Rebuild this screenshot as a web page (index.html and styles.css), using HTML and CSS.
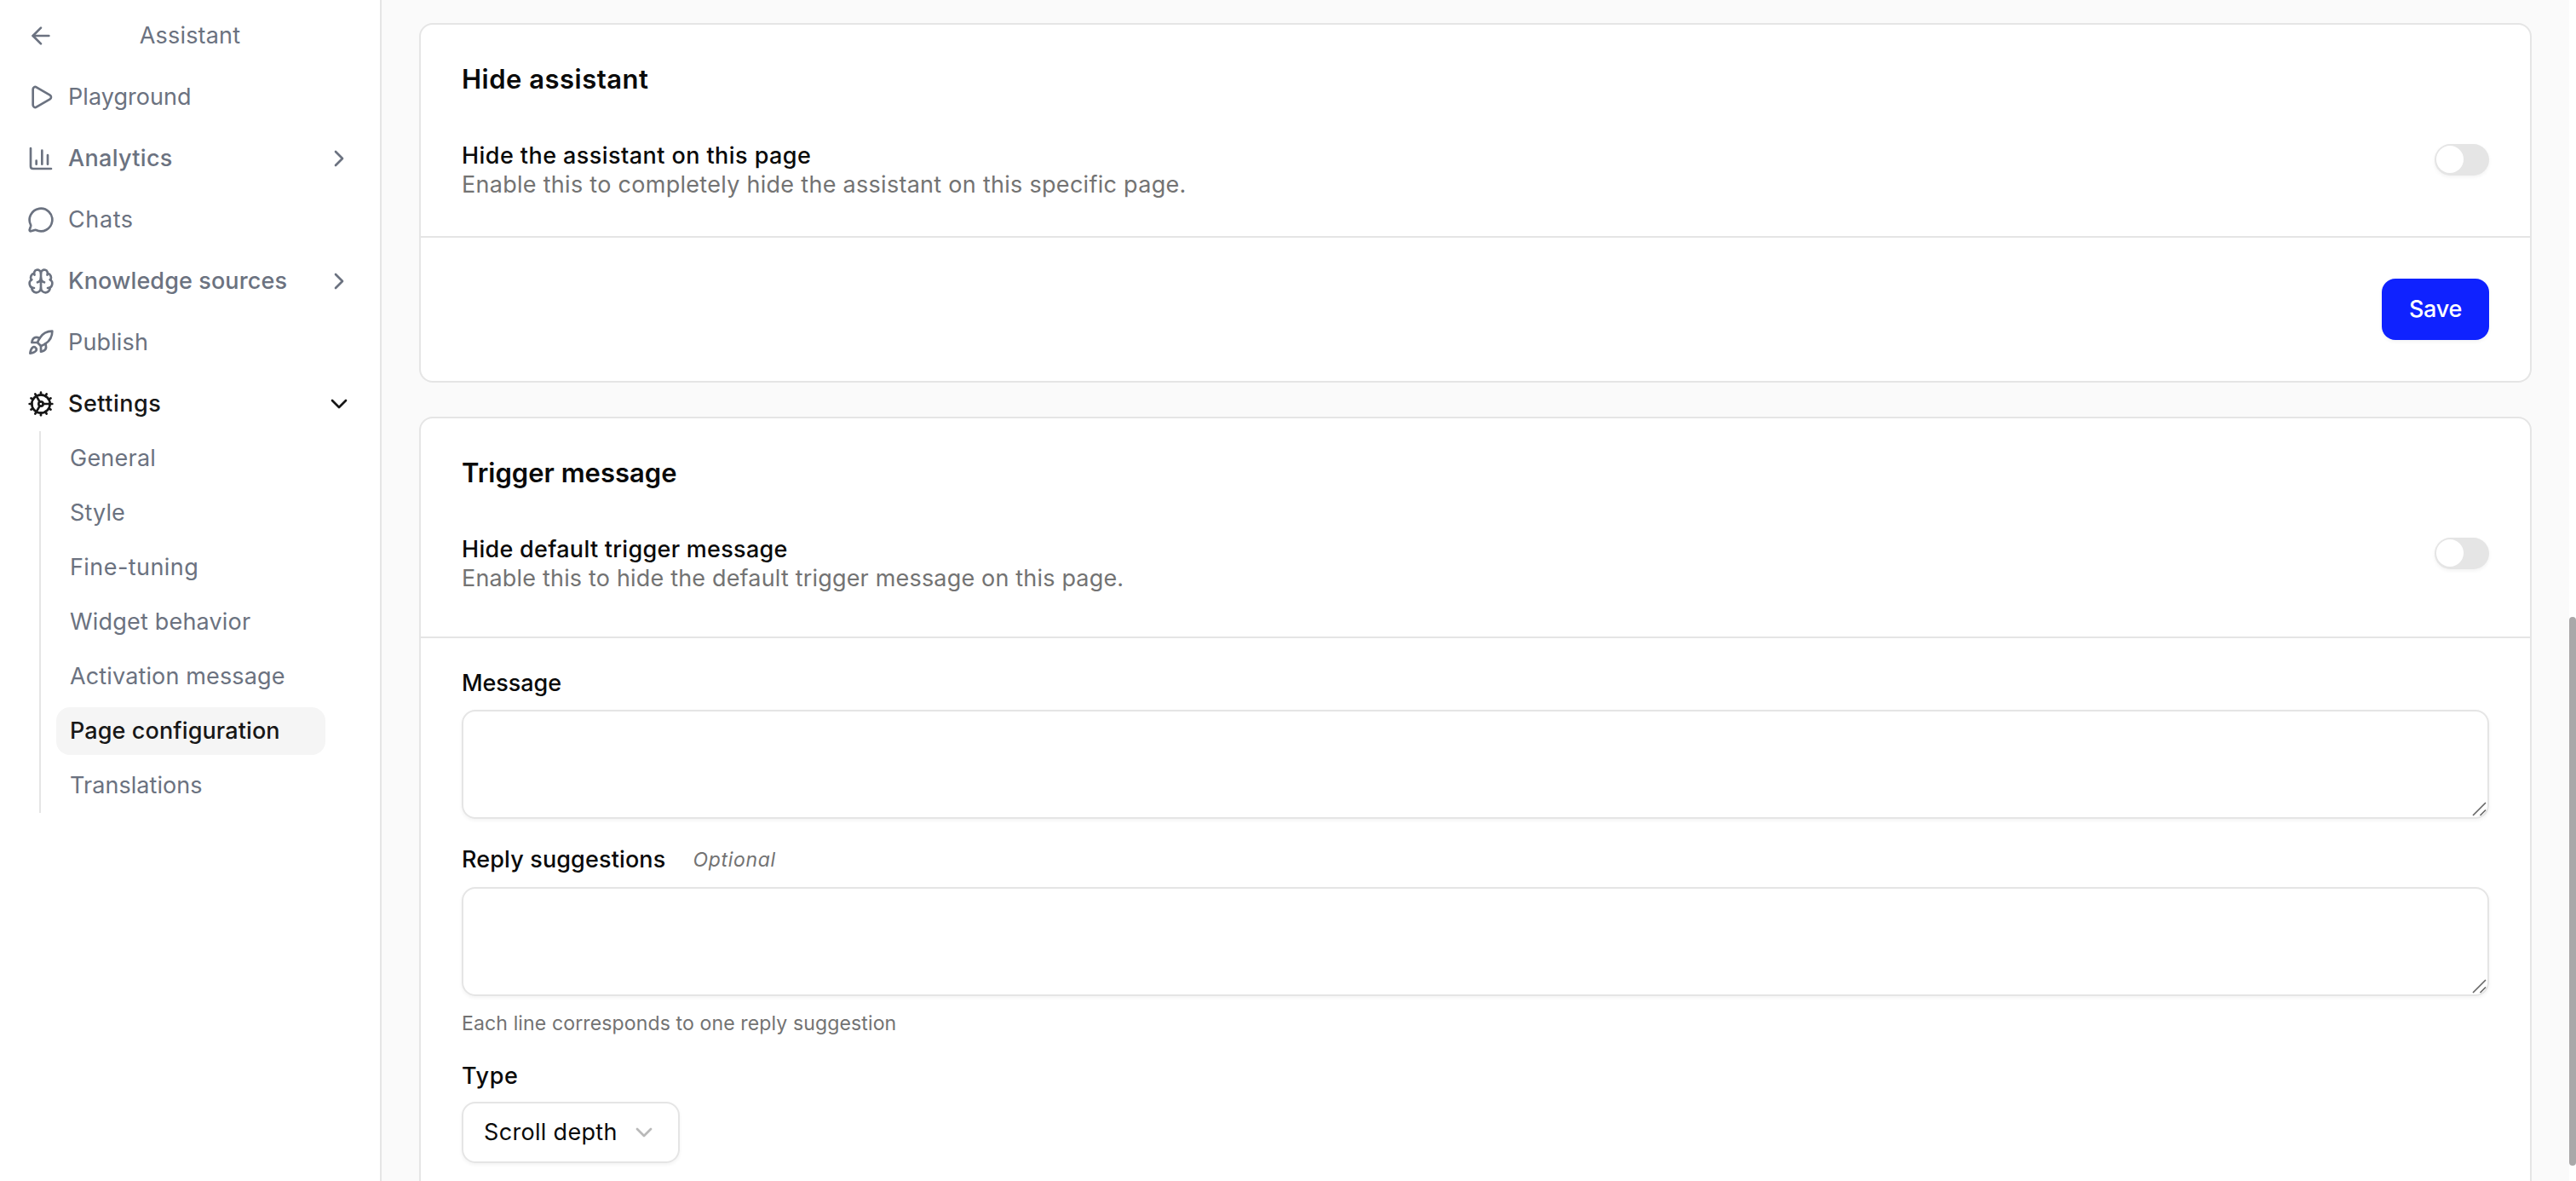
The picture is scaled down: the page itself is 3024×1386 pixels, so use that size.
FILE: index.html
```html
<!DOCTYPE html>
<html lang="en">
<head>
<meta charset="utf-8">
<title>Page configuration</title>
<link rel="stylesheet" href="styles.css">
</head>
<body>
<div class="app">
  <nav class="sidebar">
    <div class="row head">
      <svg class="icon" viewBox="0 0 24 24"><path d="m12 19-7-7 7-7"/><path d="M19 12H5"/></svg>
      <span class="head-title ls-7">Assistant</span>
    </div>
    <a class="row">
      <svg class="icon" viewBox="0 0 24 24"><path d="M5 5a2 2 0 0 1 3.008-1.728l11.997 6.998a2 2 0 0 1 .003 3.458l-12 7A2 2 0 0 1 5 19z"/></svg>
      <span class="ls-2">Playground</span>
    </a>
    <a class="row medium">
      <svg class="icon" viewBox="0 0 24 24"><path d="M3 3v16a2 2 0 0 0 2 2h16"/><path d="M18 17V9"/><path d="M13 17V5"/><path d="M8 17v-3"/></svg>
      <span class="ls-12">Analytics</span>
      <svg class="icon end" viewBox="0 0 24 24"><path d="m9 18 6-6-6-6"/></svg>
    </a>
    <a class="row">
      <svg class="icon" viewBox="0 0 24 24"><path d="M2.992 16.342a2 2 0 0 1 .094 1.167l-1.065 3.29a1 1 0 0 0 1.236 1.168l3.413-.998a2 2 0 0 1 1.099.092 10 10 0 1 0-4.777-4.719"/></svg>
      <span class="ls-22">Chats</span>
    </a>
    <a class="row medium">
      <svg class="icon" viewBox="0 0 24 24"><path d="M12 18V5"/><path d="M15 13a4.17 4.17 0 0 1-3-4 4.17 4.17 0 0 1-3 4"/><path d="M17.598 6.5A3 3 0 1 0 12 5a3 3 0 1 0-5.598 1.5"/><path d="M17.997 5.125a4 4 0 0 1 2.526 5.77"/><path d="M18 18a4 4 0 0 0 2-7.464"/><path d="M19.967 17.483A4 4 0 1 1 12 18a4 4 0 1 1-7.967-.517"/><path d="M6 18a4 4 0 0 1-2-7.464"/><path d="M6.003 5.125a4 4 0 0 0-2.526 5.77"/></svg>
      <span class="ls-4">Knowledge sources</span>
      <svg class="icon end" viewBox="0 0 24 24"><path d="m9 18 6-6-6-6"/></svg>
    </a>
    <a class="row">
      <svg class="icon" viewBox="0 0 24 24"><path d="M4.5 16.5c-1.5 1.26-2 5-2 5s3.74-.5 5-2c.71-.84.7-2.13-.09-2.91a2.18 2.18 0 0 0-2.91-.09z"/><path d="m12 15-3-3a22 22 0 0 1 2-3.95A12.88 12.88 0 0 1 22 2c0 2.72-.78 7.5-6 11a22.35 22.35 0 0 1-4 2z"/><path d="M9 12H4s.55-3.03 2-4c1.62-1.08 5 0 5 0"/><path d="M12 15v5s3.03-.55 4-2c1.08-1.62 0-5 0-5"/></svg>
      <span class="ls-5">Publish</span>
    </a>
    <a class="row medium current">
      <svg class="icon" viewBox="0 0 24 24"><circle cx="12" cy="12" r="8"/><circle cx="12" cy="12" r="2"/><path d="M12 2v2"/><path d="M12 22v-2"/><path d="m17 20.66-1-1.73"/><path d="M11 10.27 7 3.34"/><path d="m20.66 17-1.73-1"/><path d="m3.34 7 1.73 1"/><path d="M14 12h8"/><path d="M2 12h2"/><path d="m20.66 7-1.73 1"/><path d="m3.34 17 1.73-1"/><path d="m17 3.34-1 1.73"/><path d="m11 13.73-4 6.93"/></svg>
      <span class="ls-19">Settings</span>
      <svg class="icon end" viewBox="0 0 24 24"><path d="m6 9 6 6 6-6"/></svg>
    </a>
    <div class="submenu">
      <a class="sub ls-9">General</a>
      <a class="sub ls-5">Style</a>
      <a class="sub ls-16">Fine-tuning</a>
      <a class="sub ls-7">Widget behavior</a>
      <a class="sub ls-5">Activation message</a>
      <a class="sub active ls-4">Page configuration</a>
      <a class="sub ls-2">Translations</a>
    </div>
  </nav>

  <main class="content">
    <section class="card">
      <header class="card-head">
        <h2 class="title ls-16">Hide assistant</h2>
        <div class="setting">
          <div>
            <div class="setting-name ls-16">Hide the assistant on this page</div>
            <div class="setting-note ls-10">Enable this to completely hide the assistant on this specific page.</div>
          </div>
          <span class="switch"></span>
        </div>
      </header>
      <div class="card-foot">
        <button class="save">Save</button>
      </div>
    </section>

    <section class="card">
      <header class="card-head tall">
        <h2 class="title ls-0">Trigger message</h2>
        <div class="setting">
          <div>
            <div class="setting-name ls-10">Hide default trigger message</div>
            <div class="setting-note ls-6">Enable this to hide the default trigger message on this page.</div>
          </div>
          <span class="switch"></span>
        </div>
      </header>
      <div class="form">
        <div class="label ls-n3">Message</div>
        <div class="textarea">
          <svg class="grip" viewBox="0 0 20 20"><path d="M3 18 18 3M11.5 18l6.5-6.5"/></svg>
        </div>
        <div class="label second"><span class="ls-5">Reply suggestions</span><em class="optional">Optional</em></div>
        <div class="textarea">
          <svg class="grip" viewBox="0 0 20 20"><path d="M3 18 18 3M11.5 18l6.5-6.5"/></svg>
        </div>
        <div class="help ls-4">Each line corresponds to one reply suggestion</div>
        <div class="label type ls-22">Type</div>
        <div class="select">
          <span class="ls-12">Scroll depth</span>
          <svg class="icon" viewBox="0 0 24 24"><path d="m6 9 6 6 6-6"/></svg>
        </div>
      </div>
    </section>
  </main>
  <div class="scroll-track"><div class="scroll-thumb"></div></div>
</div>
</body>
</html>
```
FILE: styles.css
```css
* { box-sizing: border-box; }
body {
  margin: 0;
  font: 400 27px/40px Inter, "Liberation Sans", sans-serif;
  color: #0a0a0a;
  background: #fff;
}
.app { display: flex; height: 1386px; overflow: hidden; }

.icon {
  width: 32px;
  height: 32px;
  flex: none;
  fill: none;
  stroke: currentColor;
  stroke-width: 2;
  stroke-linecap: round;
  stroke-linejoin: round;
}

/* Sidebar */
.sidebar {
  width: 448px;
  flex: none;
  padding-top: 6px;
  border-right: 2px solid #e5e5e5;
  color: #6b7280;
}
.row {
  display: flex;
  align-items: center;
  gap: 16px;
  height: 72px;
  padding: 0 32px;
}
.head-title { flex: 1; text-align: center; padding-right: 48px; }
.medium { font-weight: 470; }
.current { color: #171717; }
.end { margin-left: auto; }
.submenu {
  display: flex;
  flex-direction: column;
  gap: 8px;
  margin: -4px 64px 0 46px;
  padding: 4px 0 4px 18px;
  border-left: 2px solid #e5e5e5;
}
.sub {
  height: 56px;
  padding: 0 16px;
  line-height: 56px;
  border-radius: 16px;
}
.sub.active { background: #f5f5f5; color: #171717; font-weight: 470; }

/* Content */
.content {
  flex: 1;
  padding: 27px 44px 0;
  background: #fafafa;
}
.card {
  border: 2px solid #e5e5e5;
  border-radius: 16px;
  background: #fff;
}
.card + .card { margin-top: 40px; height: 1000px; }
.card-head { padding: 48px 48px 40px; border-bottom: 2px solid #e5e5e5; }
.card-head.tall { padding-bottom: 48px; }
.title { margin: 0 0 59px; font-size: 31px; line-height: 32px; font-weight: 600; }
.setting { display: flex; justify-content: space-between; align-items: flex-start; }
.setting-name { padding-top: 1px; font-weight: 470; line-height: 28px; }
.setting-note { color: #737373; line-height: 40px; }
.switch {
  width: 64px;
  height: 37px;
  margin-top: 1px;
  padding: 2px;
  border-radius: 19px;
  background: #e5e5e5;
  box-shadow: 0 2px 4px rgba(0, 0, 0, .05);
}
.switch::before {
  content: "";
  display: block;
  width: 32px;
  height: 32px;
  border-radius: 50%;
  background: #fff;
}
.card-foot { display: flex; justify-content: flex-end; padding: 48px; }
.save {
  width: 126px;
  height: 72px;
  padding: 0;
  border: 0;
  border-radius: 16px;
  background: #0f22ff;
  color: #fff;
  font: inherit;
  font-weight: 470;
  letter-spacing: -.01em;
  box-shadow: 0 2px 4px rgba(0, 0, 0, .05);
}

/* Form */
.form { padding: 33px 48px 0; }
.label { display: flex; align-items: center; height: 40px; margin-bottom: 11px; font-weight: 470; }
.label.second { margin: 28px 0 12px; }
.label.type { padding-top: 2px; }
.optional { margin-left: 32px; color: #737373; font-size: 23px; font-weight: 400; letter-spacing: .03em; }
.textarea {
  position: relative;
  height: 128px;
  border: 2px solid #e5e5e5;
  border-radius: 16px;
  box-shadow: 0 2px 4px rgba(0, 0, 0, .05);
}
.grip {
  position: absolute;
  right: 0;
  bottom: 0;
  width: 20px;
  height: 20px;
  fill: none;
  stroke: #666;
  stroke-width: 1.6;
}
.help { margin: 16px 0 25px; color: #737373; font-size: 23.1px; line-height: 32px; }
.select {
  display: flex;
  align-items: center;
  justify-content: space-between;
  width: 256px;
  height: 72px;
  padding: 0 24px;
  border: 2px solid #e5e5e5;
  border-radius: 16px;
  box-shadow: 0 2px 4px rgba(0, 0, 0, .05);
}
.select .icon { color: #b9b9b9; }

/* Scrollbar */
.scroll-track { width: 8px; flex: none; padding-top: 724px; background: #fff; }
.scroll-thumb { height: 644px; border-radius: 4px; background: #aaa8a9; }

/* Letter spacing steps, in thousandths of an em */
.ls-n3 { letter-spacing: -.003em; }
.ls-0 { letter-spacing: 0; }
.ls-2 { letter-spacing: .002em; }
.ls-4 { letter-spacing: .004em; }
.ls-5 { letter-spacing: .005em; }
.ls-6 { letter-spacing: .0065em; }
.ls-7 { letter-spacing: .007em; }
.ls-9 { letter-spacing: .009em; }
.ls-10 { letter-spacing: .0105em; }
.ls-12 { letter-spacing: .012em; }
.ls-16 { letter-spacing: .016em; }
.ls-19 { letter-spacing: .019em; }
.ls-22 { letter-spacing: .022em; }
```
